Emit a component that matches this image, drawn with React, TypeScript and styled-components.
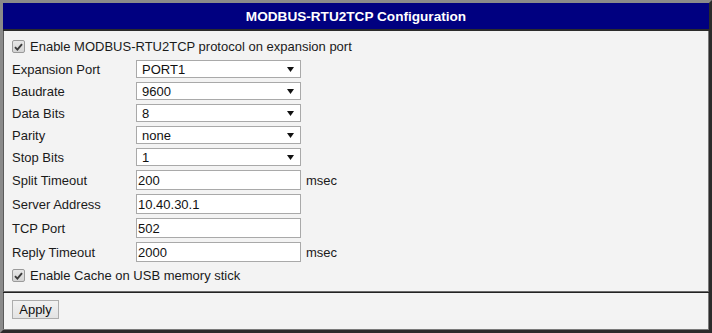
import React from 'react';
import styled, {createGlobalStyle} from 'styled-components';

const GlobalStyle = createGlobalStyle`
  html, body {
    margin: 0;
    padding: 0;
    background: #ffffff;
  }
  body {
    font-family: "Liberation Sans", Arial, sans-serif;
    font-size: 13px;
    color: #1a1a1a;
  }
`;

type SelectRow = {label: string; value: string};
type InputRow = {label: string; value: string; unit?: string};

const selectRows: SelectRow[] = [
  {label: 'Expansion Port', value: 'PORT1'},
  {label: 'Baudrate', value: '9600'},
  {label: 'Data Bits', value: '8'},
  {label: 'Parity', value: 'none'},
  {label: 'Stop Bits', value: '1'},
];

const inputRows: InputRow[] = [
  {label: 'Split Timeout', value: '200', unit: 'msec'},
  {label: 'Server Address', value: '10.40.30.1'},
  {label: 'TCP Port', value: '502'},
  {label: 'Reply Timeout', value: '2000', unit: 'msec'},
];

const Check = () => (
  <CheckBox>
    <svg width="9" height="8" viewBox="0 0 9 8">
      <path
        d="M1 4.2 L3.4 6.6 L8 1.2"
        fill="none"
        stroke="#3a3a3a"
        strokeWidth="1.9"
      />
    </svg>
  </CheckBox>
);

const Arrow = () => (
  <svg width="7" height="5" viewBox="0 0 7 5">
    <path d="M0 0 H7 L3.5 5 Z" fill="#111" />
  </svg>
);

export default function App() {
  return (
    <>
      <GlobalStyle />
      <Frame>
        <Header>MODBUS-RTU2TCP Configuration</Header>
        <Body>
          <CheckRow>
            <Check />
            <span>Enable MODBUS-RTU2TCP protocol on expansion port</span>
          </CheckRow>
          {selectRows.map(row => (
            <Row key={row.label} $h={22}>
              <Label>{row.label}</Label>
              <SelectBox>
                <span>{row.value}</span>
                <Arrow />
              </SelectBox>
            </Row>
          ))}
          {inputRows.map(row => (
            <Row key={row.label} $h={24}>
              <Label>{row.label}</Label>
              <InputBox>{row.value}</InputBox>
              {row.unit && <Unit>{row.unit}</Unit>}
            </Row>
          ))}
          <CheckRow>
            <Check />
            <span>Enable Cache on USB memory stick</span>
          </CheckRow>
        </Body>
        <Footer>
          <Button>Apply</Button>
        </Footer>
      </Frame>
    </>
  );
}

const Frame = styled.div`
  width: 712px;
  height: 333px;
  box-sizing: border-box;
  display: flex;
  flex-direction: column;
  border-top: 3px solid #8a8a8a;
  border-left: 3px solid #8a8a8a;
  border-right: 3px solid #2b2b2b;
  border-bottom: 3px solid #2b2b2b;
  box-shadow: inset -1px -1px 0 #7a7a7a, inset 1px 0 0 #5a5a5a;
  background: #f3f3f3;
`;

const Header = styled.div`
  height: 26px;
  flex: none;
  display: flex;
  align-items: center;
  justify-content: center;
  background: #000080;
  border-bottom: 2px solid #2b2b2b;
  color: #ffffff;
  font-weight: bold;
  font-size: 13.6px;
`;

const Body = styled.div`
  flex: none;
  padding: 4px 0 4px 9px;
  display: flex;
  flex-direction: column;
  border-bottom: 1px solid #6a6a6a;
`;

const Row = styled.div<{$h: number}>`
  height: ${p => p.$h}px;
  display: flex;
  align-items: center;
`;

const CheckRow = styled.div`
  height: 23px;
  display: flex;
  align-items: center;
  gap: 5px;
`;

const CheckBox = styled.span`
  width: 13px;
  height: 13px;
  box-sizing: border-box;
  border: 1px solid #9a9a9a;
  border-radius: 2px;
  background: linear-gradient(#e6e6e6, #d4d4d4);
  display: flex;
  align-items: center;
  justify-content: center;
`;

const Label = styled.span`
  width: 124px;
  flex: none;
`;

const SelectBox = styled.div`
  width: 165px;
  height: 18px;
  box-sizing: border-box;
  border: 1px solid #a9a9a9;
  background: #ffffff;
  display: flex;
  align-items: center;
  justify-content: space-between;
  padding: 0 6px 0 5px;
  color: #111;
`;

const InputBox = styled.div`
  width: 165px;
  height: 20px;
  box-sizing: border-box;
  border: 1px solid #a9a9a9;
  background: #ffffff;
  display: flex;
  align-items: center;
  padding-left: 1px;
  color: #111;
`;

const Unit = styled.span`
  margin-left: 5px;
`;

const Footer = styled.div`
  flex: 1;
  border-top: 1px solid #222222;
  padding: 7px 0 0 9px;
`;

const Button = styled.button`
  width: 47px;
  height: 19px;
  box-sizing: border-box;
  padding: 0;
  border: 1px solid #adadad;
  border-radius: 0;
  background: linear-gradient(#f2f2f2, #e3e3e3);
  font-family: "Liberation Sans", Arial, sans-serif;
  font-size: 13px;
  color: #111;
`;
